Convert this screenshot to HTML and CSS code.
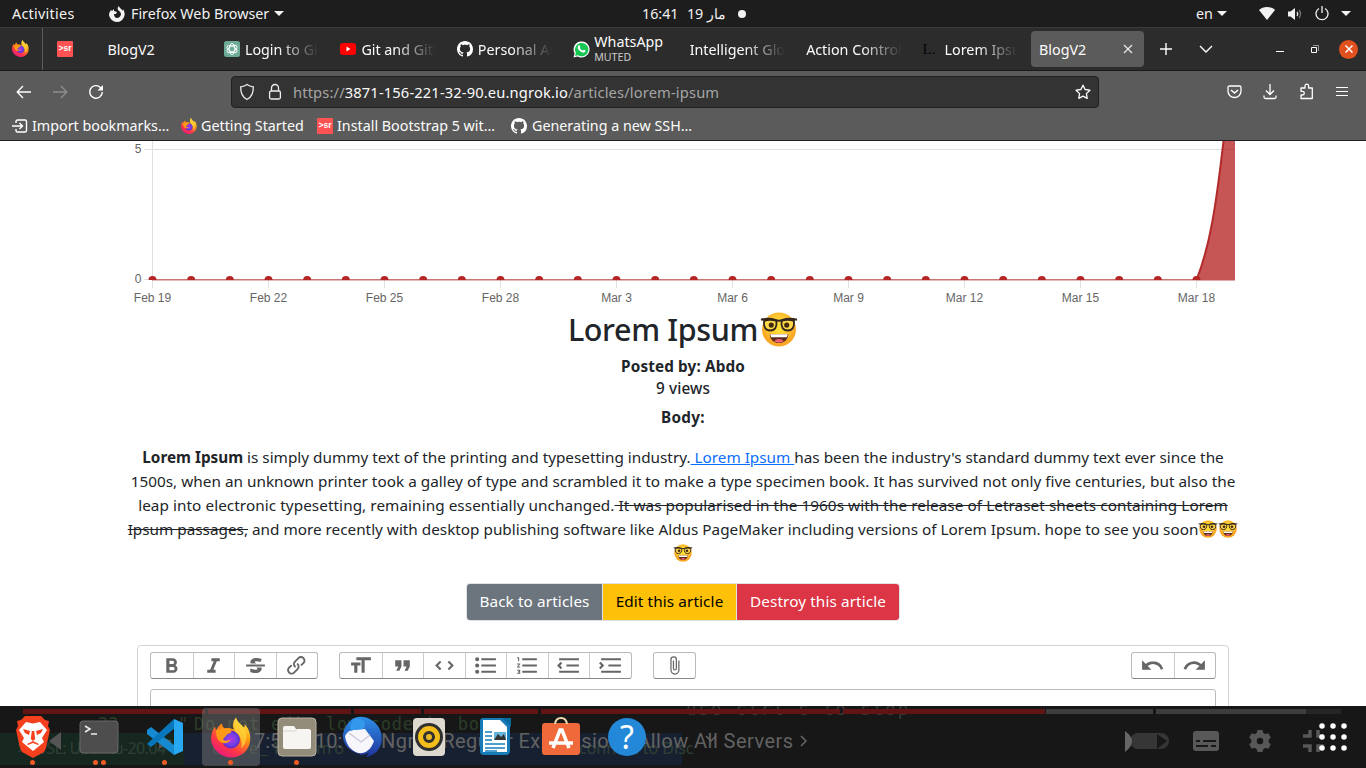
FILE: index.html
```html
<!DOCTYPE html>
<html lang="en">
<head>
<meta charset="utf-8">
<title>BlogV2</title>
<link rel="stylesheet" href="styles.css">
</head>
<body>
<svg class="defs" width="0" height="0" aria-hidden="true">
  <defs>
    <linearGradient id="fxg" x1=".8" y1="0" x2=".2" y2="1"><stop offset="0" stop-color="#fff44f"/><stop offset=".35" stop-color="#ff980e"/><stop offset=".7" stop-color="#ff3647"/><stop offset="1" stop-color="#e31587"/></linearGradient>
    <radialGradient id="fxp"><stop offset="0" stop-color="#b833e1"/><stop offset=".6" stop-color="#7542e5"/><stop offset="1" stop-color="#592acb"/></radialGradient>
    <linearGradient id="tb" x1="0" y1="0" x2="0" y2="1"><stop offset="0" stop-color="#2d8fe8"/><stop offset="1" stop-color="#20349c"/></linearGradient>
    <radialGradient id="em" cx=".5" cy=".4"><stop offset=".3" stop-color="#ffdc36"/><stop offset="1" stop-color="#f9a825"/></radialGradient>
  </defs>
  <symbol id="firefox" viewBox="0 0 40 40">
    <path fill="url(#fxg)" d="M25 0c1 5 5 6 8 10 1-1 1-2 0-4 5 5 7 11 6 18-1 9-9 16-19 16S1 32 0 22c0-5 1-9 4-13l1 4c2-4 4-6 6-7 0 2 1 4 3 5 3-1 6 0 9 1-2-4-1-8 2-12z"/>
    <circle cx="20" cy="22" r="9" fill="url(#fxp)"/>
    <path fill="#ff9a16" d="M5 13c3-2 6-2 9-2l5 1c1 1 2 2 1 3l-4 2c-1 2-3 3-4 5 2 2 5 1 8 0-2 3-6 5-10 3-4-3-5-7-5-12z"/>
    <path fill="#ffd43b" d="M25 0c1 5 6 7 9 13 3 7 1 14-4 18 2-7 0-12-5-16-3-4-3-10 0-15z" opacity=".75"/>
  </symbol>
  <symbol id="github" viewBox="0 0 16 16"><path fill="#fff" d="M8 0C3.58 0 0 3.58 0 8c0 3.54 2.29 6.53 5.47 7.59.4.07.55-.17.55-.38 0-.19-.01-.82-.01-1.49-2.01.37-2.53-.49-2.69-.94-.09-.23-.48-.94-.82-1.13-.28-.15-.68-.52-.01-.53.63-.01 1.08.58 1.23.82.72 1.21 1.87.87 2.33.66.07-.52.28-.87.51-1.07-1.78-.2-3.64-.89-3.64-3.95 0-.87.31-1.59.82-2.15-.08-.2-.36-1.02.08-2.12 0 0 .67-.21 2.2.82.64-.18 1.32-.27 2-.27s1.36.09 2 .27c1.53-1.04 2.2-.82 2.2-.82.44 1.1.16 1.92.08 2.12.51.56.82 1.27.82 2.15 0 3.07-1.87 3.75-3.65 3.95.29.25.54.73.54 1.48 0 1.07-.01 1.93-.01 2.2 0 .21.15.46.55.38A8.01 8.01 0 0 0 16 8c0-4.42-3.58-8-8-8z"/></symbol>
  <symbol id="nerd" viewBox="0 0 36 34">
    <circle cx="18" cy="17" r="16.500" fill="url(#em)"/>
    <path d="M9 21.500h18c-.5 6-4.500 8.500-9 8.500s-8.500-2.500-9-8.500z" fill="#5d2a1b"/><path d="M9.500 21.500h17l-.8 3H10.300z" fill="#fff"/><path d="M13.500 28.500c2-3 7-3 9 0-2.500 1.800-6.500 1.800-9 0z" fill="#ee5f78"/>
    <path d="M3.500 8.500q6-2 12 0 1 9.500-6 9.500t-6-9.500zM20.500 8.500q6-2 12 0 1 9.500-6 9.500t-6-9.500z" fill="#ffd84a" stroke="#33261c" stroke-width="1.800"/>
    <path d="M.5 7.500q8-2 14 .3 3.500 1.400 7 0 6-2.300 14-.3" fill="none" stroke="#33261c" stroke-width="2"/>
    <circle cx="10.500" cy="12.700" r="2.500" fill="#422b0d"/><circle cx="25.500" cy="12.700" r="2.500" fill="#422b0d"/>
  </symbol>
</svg>

<header class="topbar">
  <span class="t-act">Activities</span>
  <svg class="t-fx" width="16" height="16" viewBox="0 0 16 16"><path fill="#f2f2f2" d="M10 0c0 2 3 3 4 5V3c2 3 2 6 1 8-1 3-4 5-7 5-4 0-7-3-8-7 0-2 1-4 2-5l1 1 2-2v2l3 1-1 2H5c0 2 1 4 3 4s4-2 4-4-2-3-3-4c-1-2 0-3 1-4z"/></svg>
  <span class="t-app">Firefox Web Browser</span>
  <i class="caret c1"></i>
  <span class="t-time">16:41</span><span class="t-date" dir="rtl">مار 19</span><i class="dot"></i>
  <span class="t-en">en</span><i class="caret c2"></i>
  <svg class="t-wifi" width="16" height="14" viewBox="0 0 16 14"><path fill="#f2f2f2" d="M0 3C4-1 12-1 16 3L8 13z"/></svg>
  <svg class="t-vol" width="16" height="14" viewBox="0 0 16 14"><path fill="#f2f2f2" d="M1 4.500h2.500L8 1v12L3.500 9.500H1z"/><path d="M10 5q1.500 2 0 4" fill="none" stroke="#eee" stroke-width="1.300"/><path d="M12 3q3 4 0 8" fill="none" stroke="#777" stroke-width="1.300"/></svg>
  <svg class="t-pow" width="14" height="15" viewBox="0 0 14 15"><path d="M4 2.500a6 6 0 1 0 6 0M7 0v7" fill="none" stroke="#f2f2f2" stroke-width="1.300"/></svg>
  <i class="caret c3"></i>
</header>

<nav class="tabs">
  <div class="pin"><svg width="17" height="17"><use href="#firefox"/></svg></div>
  <div class="pin2"><span class="sr">&gt;sr</span></div>
  <div class="tab"><span class="lbl">BlogV2</span></div>
  <div class="tab"><svg width="16" height="16" viewBox="0 0 16 16"><rect width="16" height="16" rx="2.500" fill="#6cab97"/><g fill="none" stroke="#fff" stroke-width=".9"><ellipse cx="8" cy="8" rx="2.800" ry="5.500"/><ellipse cx="8" cy="8" rx="2.800" ry="5.500" transform="rotate(60 8 8)"/><ellipse cx="8" cy="8" rx="2.800" ry="5.500" transform="rotate(120 8 8)"/></g></svg><span class="lbl fade">Login to GitH</span></div>
  <div class="tab"><svg width="16" height="16" viewBox="0 0 16 16"><rect y="2" width="16" height="12" rx="3" fill="#f00"/><path d="M6.500 5.500 10.500 8l-4 2.500z" fill="#fff"/></svg><span class="lbl fade">Git and GitHub</span></div>
  <div class="tab"><svg width="16" height="16"><use href="#github"/></svg><span class="lbl fade">Personal Acc</span></div>
  <div class="tab wa"><svg width="17" height="17" viewBox="0 0 17 17"><path d="M.5 16.500 1.600 12.400A8 8 0 1 1 4.600 15.400z" fill="#fff"/><path d="M2 15l.9-3A6.700 6.700 0 1 1 5 14.200z" fill="#16c653"/><path d="M5.500 4.500c1-.8 1.300 0 1.800 1.300.2.500-.7.900-.5 1.300.7 1.300 1.600 2 2.800 2.500.5.100.8-1 1.200-.9l1.700.9c0 2-1.600 2.300-3 1.900C6.800 10.500 5 8.500 4.800 7c-.1-1.200.2-2 .7-2.500z" fill="#fff"/></svg><span class="two"><b>WhatsApp</b><small>MUTED</small></span></div>
  <div class="tab"><span class="lbl fade">Intelligent Glob</span></div>
  <div class="tab"><span class="lbl fade">Action Controlle</span></div>
  <div class="tab"><span class="ell">L.</span><span class="lbl fade">Lorem Ipsum -</span></div>
  <div class="tab active"><span class="lbl">BlogV2</span><svg width="10" height="10" viewBox="0 0 10 10"><path d="M1 1l8 8M9 1 1 9" stroke="#eee" stroke-width="1.100"/></svg></div>
  <svg class="plus" width="14" height="14" viewBox="0 0 14 14"><path d="M7 1v12M1 7h12" stroke="#fff" stroke-width="1.400"/></svg>
  <svg class="chev" width="14" height="9" viewBox="0 0 14 9"><path d="m1 1 6 6 6-6" fill="none" stroke="#fff" stroke-width="1.400"/></svg>
  <svg class="min" width="8" height="10" viewBox="0 0 8 10"><path d="M0 7.500h8" stroke="#fff"/></svg>
  <svg class="max" width="9" height="9" viewBox="0 0 9 9"><path d="M1.500 2.500h5v5h-5z" fill="none" stroke="#fff"/><path d="M3 .5h5.500V6" fill="none" stroke="#999"/></svg>
  <span class="close"><svg width="8" height="8" viewBox="0 0 8 8"><path d="M.5.5l7 7M7.500.5l-7 7" stroke="#fff" stroke-width="1.500"/></svg></span>
</nav>

<section class="chrome">
  <div class="navrow">
    <svg class="back" width="16" height="14" viewBox="0 0 16 14"><path d="M15 7H1.500M7 1 1.200 7 7 13" fill="none" stroke="#fff" stroke-width="1.300"/></svg>
    <svg class="fwd" width="16" height="14" viewBox="0 0 16 14"><path d="M1 7h13.500M9 1l5.800 6L9 13" fill="none" stroke="#8e8e8e" stroke-width="1.300"/></svg>
    <svg class="rel" width="16" height="16" viewBox="0 0 16 16"><path d="M14.300 8A6.300 6.300 0 1 1 12.500 3.500L14 5" fill="none" stroke="#fff" stroke-width="1.400"/><path d="M15 1v5.500H9.500z" fill="#fff"/></svg>
    <div class="url">
      <svg width="16" height="18" viewBox="0 0 16 18"><path d="M8 1.500c2 1.500 4 2 6.300 2.300C14.500 10 12 14.500 8 16.500 4 14.500 1.500 10 1.700 3.800 4 3.500 6 3 8 1.500z" fill="none" stroke="#eee" stroke-width="1.300"/></svg>
      <svg width="14" height="18" viewBox="0 0 14 18"><rect x="1.600" y="8" width="10.800" height="8" rx="1.500" fill="none" stroke="#eee" stroke-width="1.300"/><path d="M3.500 8V5a3.500 3.500 0 0 1 7 0v3" fill="none" stroke="#eee" stroke-width="1.300"/></svg>
      <span class="addr">https://<b>3871-156-221-32-90.eu.ngrok.io</b>/articles/lorem-ipsum</span>
      <svg class="star" width="16" height="16" viewBox="0 0 16 16"><path d="m8 1.200 2.100 4.300 4.800.7-3.500 3.400.8 4.700L8 12.100l-4.200 2.200.8-4.700L1.100 6.200l4.800-.7z" fill="none" stroke="#fff" stroke-width="1.300" stroke-linejoin="round"/></svg>
    </div>
    <svg class="pocket" width="15" height="14" viewBox="0 0 15 14"><path d="M1 2.500q0-1.500 1.500-1.500h10Q14 1 14 2.500V6c0 4-3 6.500-6.500 6.500S1 10 1 6z" fill="none" stroke="#fff" stroke-width="1.300"/><path d="m4 5 3.500 3L11 5" fill="none" stroke="#fff" stroke-width="1.500"/></svg>
    <svg class="dl" width="14" height="16" viewBox="0 0 14 16"><path d="M7 0v10M3 6.500l4 4 4-4M1 11.500V13q0 1.500 1.500 1.500h9Q13 14.500 13 13v-1.500" fill="none" stroke="#fff" stroke-width="1.300"/></svg>
    <svg class="ext" width="15" height="17" viewBox="0 0 15 17"><path d="M2 5h4V3a1.800 1.800 0 0 1 3.600 0v2h3.700v10.500H2V12h1.500a1.800 1.800 0 0 0 0-3.600H2z" fill="none" stroke="#fff" stroke-width="1.300" stroke-linejoin="round"/></svg>
    <svg class="menu" width="12" height="11" viewBox="0 0 12 11"><path d="M0 1.500h12M0 5.500h12M0 9.500h12" stroke="#fff"/></svg>
  </div>
  <div class="marks">
    <svg class="m1" width="16" height="14" viewBox="0 0 16 14"><path d="M4 4V2.500Q4 1 5.500 1H13q1.500 0 1.500 1.500v9Q14.500 13 13 13H5.500Q4 13 4 11.500V10M0 7h10M7.500 4 10.500 7l-3 3" fill="none" stroke="#fff" stroke-width="1.400"/></svg><span class="k1">Import bookmarks…</span>
    <svg class="m2" width="16" height="16"><use href="#firefox"/></svg><span class="k2">Getting Started</span>
    <span class="sr m3">&gt;sr</span><span class="k3">Install Bootstrap 5 wit…</span>
    <svg class="m4" width="16" height="16"><use href="#github"/></svg><span class="k4">Generating a new SSH…</span>
  </div>
</section>

<main class="page">
  <svg class="chart" width="1366" height="170" viewBox="0 141 1366 170">
    <path d="M144 149.500h1091M152.500 141v147" stroke="#e0e0e0" fill="none"/>
    <path d="M268.500 280v8M384.500 280v8M500.500 280v8M616.500 280v8M732.500 280v8M848.500 280v8M964.500 280v8M1080.500 280v8M1196.500 280v8M144 279.500h8" stroke="#e0e0e0"/>
    <path d="M1196.500 280.500C1210 246 1216 206 1223.500 141H1235V280.500z" fill="#c65555"/>
    <path d="M1223 149.500h12" stroke="#b94c4c"/>
    <path d="M152 279.800h1044" stroke="#ca7474" stroke-width="1.400"/><path d="M1196.500 280C1210 246 1216 206 1223.500 141" fill="none" stroke="#b22a2a" stroke-width="2"/>
    <path fill="#b52525" d="M148.500 280a4 4 0 0 1 8 0zm38.670 0a4 4 0 0 1 8 0zm38.660 0a4 4 0 0 1 8 0zm38.670 0a4 4 0 0 1 8 0zm38.670 0a4 4 0 0 1 8 0zm38.660 0a4 4 0 0 1 8 0zm38.670 0a4 4 0 0 1 8 0zm38.670 0a4 4 0 0 1 8 0zm38.660 0a4 4 0 0 1 8 0zm38.670 0a4 4 0 0 1 8 0zm38.670 0a4 4 0 0 1 8 0zm38.660 0a4 4 0 0 1 8 0zm38.670 0a4 4 0 0 1 8 0zm38.670 0a4 4 0 0 1 8 0zm38.660 0a4 4 0 0 1 8 0zm38.670 0a4 4 0 0 1 8 0zm38.670 0a4 4 0 0 1 8 0zm38.660 0a4 4 0 0 1 8 0zm38.670 0a4 4 0 0 1 8 0zm38.670 0a4 4 0 0 1 8 0zm38.660 0a4 4 0 0 1 8 0zm38.670 0a4 4 0 0 1 8 0zm38.670 0a4 4 0 0 1 8 0zm38.660 0a4 4 0 0 1 8 0zm38.670 0a4 4 0 0 1 8 0zm38.670 0a4 4 0 0 1 8 0zm38.660 0a4 4 0 0 1 8 0zm38.670 0a4 4 0 0 1 8 0z"/>
    <g class="axis"><text x="138" y="153">5</text><text x="138" y="283">0</text><text x="152.500" y="302">Feb 19</text><text x="268.500" y="302">Feb 22</text><text x="384.500" y="302">Feb 25</text><text x="500.500" y="302">Feb 28</text><text x="616.500" y="302">Mar 3</text><text x="732.500" y="302">Mar 6</text><text x="848.500" y="302">Mar 9</text><text x="964.500" y="302">Mar 12</text><text x="1080.500" y="302">Mar 15</text><text x="1196.500" y="302">Mar 18</text></g>
  </svg>
  <h1><span>Lorem Ipsum</span><svg width="38" height="35"><use href="#nerd"/></svg></h1>
  <h2 class="by">Posted by: Abdo</h2>
  <h2 class="views">9 views</h2>
  <h2 class="bodyh">Body:</h2>
  <div class="article">
    <div class="line"><span class="l1"><strong>Lorem Ipsum</strong> is simply dummy text of the printing and typesetting industry.<a> Lorem Ipsum </a>has been the industry's standard dummy text ever since the</span></div>
    <div class="line"><span class="l2">1500s, when an unknown printer took a galley of type and scrambled it to make a type specimen book. It has survived not only five centuries, but also the</span></div>
    <div class="line"><span class="l3">leap into electronic typesetting, remaining essentially unchanged.<del> It was popularised in the 1960s with the release of Letraset sheets containing Lorem</del></span></div>
    <div class="line"><span class="l4"><del>Ipsum passages,</del> and more recently with desktop publishing software like Aldus PageMaker including versions of Lorem Ipsum. hope to see you soon</span><svg width="20" height="18"><use href="#nerd"/></svg><svg width="20" height="18"><use href="#nerd"/></svg></div>
    <div class="line"><svg width="20" height="18"><use href="#nerd"/></svg></div>
  </div>
  <div class="actions"><a class="b1">Back to articles</a><a class="b2">Edit this article</a><a class="b3">Destroy this article</a></div>
  <div class="trix">
    <div class="tools">
      <div class="grp">
        <i><svg viewBox="0 0 24 24"><path d="M15.600 11.800c1-.7 1.600-1.800 1.600-2.800a4 4 0 0 0-4-4H7v14h7c2.100 0 3.700-1.700 3.700-3.800 0-1.500-.8-2.800-2.100-3.400zM10 7.500h3a1.500 1.500 0 1 1 0 3h-3v-3zm3.500 9H10v-3h3.500a1.500 1.500 0 1 1 0 3z"/></svg></i>
        <i><svg viewBox="0 0 24 24"><path d="M10 5v3h2.200l-3.400 8H6v3h8v-3h-2.200l3.400-8H18V5h-8z"/></svg></i>
        <i><svg viewBox="0 0 24 24"><path d="M12.730 14l.28.14c.26.15.45.3.57.44.12.14.18.3.18.5 0 .3-.15.56-.44.75-.3.2-.76.3-1.390.3A13.520 13.520 0 0 1 7 14.950v3.370a10.640 10.640 0 0 0 4.840.88c1.260 0 2.350-.19 3.280-.56.93-.37 1.640-.9 2.140-1.570s.74-1.450.74-2.320c0-.26-.02-.51-.06-.75h-5.210zm-5.500-4c-.08-.34-.12-.7-.12-1.100 0-1.290.52-2.300 1.580-3.020 1.050-.72 2.500-1.080 4.340-1.080 1.620 0 3.280.34 4.970 1l-1.300 2.930c-1.470-.6-2.730-.9-3.800-.9-.55 0-.96.08-1.200.26-.26.17-.38.38-.38.64 0 .27.16.52.48.74.17.12.53.3 1.050.53H7.230zM3 13h18v-2H3v2z"/></svg></i>
        <i><svg viewBox="0 0 24 24"><path d="M9.880 13.700a4.300 4.300 0 0 1 0-6.070l3.370-3.370a4.260 4.260 0 0 1 6.070 0 4.300 4.300 0 0 1 0 6.060l-1.960 1.720a.91.91 0 1 1-1.300-1.300l1.970-1.710a2.460 2.460 0 0 0-3.480-3.480l-3.380 3.370a2.460 2.460 0 0 0 0 3.480.91.91 0 1 1-1.300 1.300z"/><path d="M4.250 19.460a4.300 4.300 0 0 1 0-6.070l1.930-1.900a.91.91 0 1 1 1.300 1.300l-1.930 1.900a2.460 2.460 0 0 0 3.480 3.480l3.370-3.380c.96-.96.96-2.520 0-3.480a.91.91 0 1 1 1.300-1.300 4.300 4.300 0 0 1 0 6.070l-3.380 3.380a4.260 4.260 0 0 1-6.070 0z"/></svg></i>
      </div>
      <div class="grp">
        <i><svg viewBox="0 0 24 24"><path d="M12 9v3H9v7H6v-7H3V9h9zM8 4h14v3h-6v12h-3V7H8V4z"/></svg></i>
        <i><svg viewBox="0 0 24 24"><path d="M6 17h3l2-4V7H5v6h3zm8 0h3l2-4V7h-6v6h3z"/></svg></i>
        <i><svg viewBox="0 0 24 24"><path d="M18.200 12L15 15.200l1.400 1.400L21 12l-4.600-4.600L15 8.800l3.200 3.200zM5.800 12L9 8.800 7.600 7.400 3 12l4.600 4.600L9 15.200 5.800 12z"/></svg></i>
        <i><svg viewBox="0 0 24 24"><path d="M4 4a2 2 0 1 0 0 4 2 2 0 0 0 0-4zm0 6a2 2 0 1 0 0 4 2 2 0 0 0 0-4zm0 6a2 2 0 1 0 0 4 2 2 0 0 0 0-4zm4 3h14v-2H8v2zm0-6h14v-2H8v2zm0-8v2h14V5H8z"/></svg></i>
        <i><svg viewBox="0 0 24 24"><path d="M2 17h2v.5H3v1h1v.5H2v1h3v-4H2v1zm1-9h1V4H2v1h1v3zm-1 3h1.800L2 13.100v.9h3v-1H3.200L5 10.900V10H2v1zm5-6v2h14V5H7zm0 14h14v-2H7v2zm0-6h14v-2H7v2z"/></svg></i>
        <i><svg viewBox="0 0 24 24"><path d="M3 19h19v-2H3v2zm7-6h12v-2H10v2zm-8.300-.3l2.800 2.900L6 14.200 4 12l2-2-1.400-1.500L1 12l.7.7zM3 5v2h19V5H3z"/></svg></i>
        <i><svg viewBox="0 0 24 24"><path d="M3 19h19v-2H3v2zm7-6h12v-2H10v2zm-6.900-1L1 14.200l1.400 1.400L6 12l-.7-.7-2.800-2.800L1 9.900 3.100 12zM3 5v2h19V5H3z"/></svg></i>
      </div>
      <div class="grp"><i><svg viewBox="0 0 24 24"><path d="M16.500 6v11.500a4 4 0 1 1-8 0V5a2.500 2.500 0 0 1 5 0v10.500a1 1 0 1 1-2 0V6H10v9.500a2.500 2.500 0 0 0 5 0V5a4 4 0 1 0-8 0v12.500a5.500 5.500 0 0 0 11 0V6h-1.500z" transform="translate(2.400 2.400) scale(.8)"/></svg></i></div>
      <div class="grp last">
        <i><svg viewBox="0 0 24 24"><path d="M12.500 8c-2.600 0-5 1-6.900 2.600L2 7v9h9l-3.600-3.600A8 8 0 0 1 20 16l2.400-.8a10.500 10.500 0 0 0-10-7.200z"/></svg></i>
        <i><svg viewBox="0 0 24 24"><path d="M18.400 10.600a10.500 10.500 0 0 0-16.900 4.600L4 16a8 8 0 0 1 12.700-3.600L13 16h9V7l-3.600 3.600z"/></svg></i>
      </div>
    </div>
    <div class="editor"></div>
  </div>
</main>

<footer class="dock">
  <svg class="ghost" width="1366" height="62" viewBox="0 706 1366 62">
    <rect y="733" width="184" height="32" fill="#15271f"/><rect x="184" y="733" width="498" height="32" fill="#172030"/>
    <g class="code"><text x="98" y="730">22</text><text x="178" y="730">"</text><text x="194" y="730" textLength="296">Do not edit low code in box</text></g>
    <g class="wsl"><text x="16" y="754" textLength="150">✕ WSL: Ubuntu-20.04</text><text x="212" y="754" textLength="132">code_1 demo</text><text x="560" y="754">Reconnect to Disc</text></g>
    <text class="stop" x="686" y="715" textLength="222">use ctrl c to stop</text>
    <path d="M23 711.500h182M208 711.500h143M354 711.500h67M424 711.500h114M541 711.500h299M843 711.500h202" stroke="#611414" stroke-width="5"/>
    <path d="M1046 711.500h107M1156 711.500h150" stroke="#3d3d3d" stroke-width="5"/><path d="M1306 711.500h35" stroke="#262626" stroke-width="5"/>
    <path d="M49 741l12-9v18zM159 736l13 5-13 8z" fill="#555"/>
    <g class="vid"><text x="254" y="748">7:5</text><text x="315" y="748">10:1</text><text x="381" y="748" textLength="412">Ngrok Regular Expression · Allow All Servers</text></g>
    <path d="m801 736 5 5-5 5M706 736l5 5 5-5" fill="none" stroke="#666" stroke-width="1.500"/>
    <rect x="1130" y="733" width="39" height="16" rx="8" fill="#363636"/><path d="M1125 731q14 10 0 21z" fill="#666"/><path d="M1157 734l10 7-10 8z" fill="#171717"/>
    <rect x="1193" y="731" width="26" height="20" rx="3" fill="#585858"/><path d="M1196 741h4M1203 741h13M1196 746h12M1211 746h5" stroke="#181818" stroke-width="2"/>
    <circle cx="1260" cy="741" r="6" fill="none" stroke="#585858" stroke-width="5.500"/><path d="M1257.500 730h5l1 4h-7zM1257.500 752h5l1-4h-7zM1268.300 733.300l2.500 4.300-3 2.900-3.500-6zM1249.200 744.400l2.500 4.300 4-1.200-3.500-6zM1270.800 744.400l-2.500 4.300-4-1.200 3.500-6zM1251.700 733.300l-2.500 4.300 3 2.900 3.500-6z" fill="#585858"/>
    <path d="M1303 736h7v-6M1303 746h7v6M1324 736h-6v-6M1324 746h-6v6" fill="none" stroke="#585858" stroke-width="3.500"/>
  </svg>
  <div class="apps">
    <div class="app d1"><svg width="36" height="42" viewBox="0 0 36 42"><path d="M10 0h16l4 4 4 1-1 5 2 4-4 18-2 4-11 6-11-6-2-4L1 14l2-4-1-5 4-1z" fill="#f4401c"/><path d="M11 6l7 1.500L25 6l7 8-5 8 2 4-6 5-5 4-5-4-6-5 2-4-5-8z" fill="#fff"/><path d="M8 13l7 2-1 4-4-2zM28 13l-7 2 1 4 4-2zM16.800 15h2.400l1 8L18 25l-2.200-2zM12 28l6-3 6 3-1 1-5-2-5 2z" fill="#f4401c"/></svg></div>
    <div class="app d2"><svg width="40" height="34" viewBox="0 0 40 34"><rect x="1" y="1" width="38" height="32" rx="3" fill="#4d4d4d" stroke="#696969"/><path d="m6 6 5 3-5 3M12 14h6" fill="none" stroke="#eee" stroke-width="1.500"/></svg></div>
    <div class="app d1"><svg width="38" height="38" viewBox="0 0 38 38"><path d="M1 12l4-3 23 18v10L1 16z" fill="#168ad0"/><path d="M1 26 28 1v10L5 29z" fill="#0876bb"/><path d="m28 1 9 4v28l-9 4z" fill="#28a8f3"/></svg></div>
    <div class="app d1 on"><svg width="40" height="41"><use href="#firefox"/></svg></div>
    <div class="app d1"><svg width="40" height="40" viewBox="0 0 40 40"><rect x="1" y="1" width="38" height="38" rx="4" fill="#948c7a" stroke="#b9b19f"/><path d="M6 11q0-2 2-2h9l2 3h13q2 0 2 2v16q0 2-2 2H8q-2 0-2-2z" fill="#f6f5f2"/><path d="M6 14h12l2-2" fill="none" stroke="#d8d5cc"/></svg></div>
    <div class="app"><svg width="42" height="42" viewBox="0 0 42 42"><path d="M8 5C14-1 24 0 31 5c8 6 10 15 8 23-2 7-8 12-15 13l3-4-7 2C8 36 0 29 1 18 2 12 5 8 8 5z" fill="url(#tb)"/><path d="M3 20c2-4 5-6 8-6l12-1 9 12c-3 9-9 13-16 12C8 34 4 28 3 20z" fill="#f7f7fb"/><path d="M7 17l12 9 9-7" fill="none" stroke="#c4c7d8" stroke-width="1.200"/><path d="M12 3c9-2 13 4 10 9-3 3-9 0-13 3-2-4 0-9 3-12z" fill="#3299eb"/></svg></div>
    <div class="app"><svg width="34" height="40" viewBox="0 0 34 40"><rect x="1" y="1" width="32" height="38" rx="4" fill="#ded9ce"/><circle cx="17" cy="20" r="14" fill="#303030"/><circle cx="17" cy="20" r="8.500" fill="#303030" stroke="#f3bd1a" stroke-width="5"/><circle cx="17" cy="20" r="3" fill="#e8b926"/></svg></div>
    <div class="app"><svg width="34" height="40" viewBox="0 0 34 40"><path d="M4 1h28v33q0 4-4 4H6q-4 0-4-4V3z" fill="#167bb6"/><path d="M5 3h17l7 7v25H5z" fill="#fff"/><path d="M24 1h9v9z" fill="#066aa0"/><path d="M7 15h7M7 19h7M7 23h7M7 27h20M7 31h20M7 34h12" stroke="#1680be" stroke-width="1.500"/><rect x="16" y="15" width="12" height="8" fill="#66b5df"/><path d="m16 23 4-6 3 3 3-3 2 6" fill="#333"/></svg></div>
    <div class="app"><svg width="40" height="40" viewBox="0 0 40 40"><rect x="1" y="6" width="38" height="32" rx="3" fill="#f0693b"/><path d="M14 7C15-1 25-1 26 7" fill="none" stroke="#f3d8ae" stroke-width="2"/><path d="m12 31 7-18h2l7 18M8 26h24" fill="none" stroke="#fff" stroke-width="3.500"/></svg></div>
    <div class="app"><svg width="40" height="40" viewBox="0 0 40 40"><circle cx="20" cy="20" r="19" fill="#2388d8"/><text class="q" x="20" y="31.500">?</text></svg></div>
  </div>
  <svg class="grid" width="28" height="28" viewBox="0 0 28 28"><path d="M3 3h.01M14 3h.01M25 3h.01M3 14h.01M14 14h.01M25 14h.01M3 25h.01M14 25h.01M25 25h.01" stroke="#fff" stroke-width="5.500" stroke-linecap="round"/></svg>
</footer>
</body>
</html>
```
FILE: styles.css
```css
* { box-sizing: border-box; }
body { margin: 0; width: 1366px; height: 768px; overflow: hidden; display: flex; flex-direction: column; background: #fff; color: #212529; font-family: "Noto Sans", "Open Sans", sans-serif; font-size: 14.300px; }
svg { display: block; flex: none; }
.defs { position: absolute; }
span, b, small { white-space: nowrap; }

.topbar { height: 27px; flex: none; display: flex; align-items: center; background: #1d1d1d; color: #f2f2f2; padding-left: 12px; }
.t-act { width: 97px; letter-spacing: .3px; }
.t-app { width: 143px; margin-left: 6px; }
.caret { border: 5px solid transparent; border-top-color: #f2f2f2; border-bottom: 0; flex: none; }
.c1 { margin-right: 358px; }
.t-time { width: 44px; }
.t-date { width: 40px; text-align: right; }
.dot { width: 8px; height: 8px; border-radius: 50%; background: #f2f2f2; margin: 0 450px 0 12px; }
.t-en { width: 21px; }
.c2 { margin-right: 32px; }
.t-wifi { margin-right: 12px; }
.t-vol { margin-right: 12px; }
.t-pow { margin-right: 12px; }

.tabs { height: 44px; flex: none; display: flex; align-items: center; background: #2c2c2c; border-top: 1px solid #3a3a3a; border-bottom: 1px solid #1a1a1a; color: #fbfbfb; }
.pin { width: 43px; height: 42px; padding: 12px 0 0 12px; border-right: 1px solid #5c5c5c; flex: none; }
.pin2 { width: 56.500px; padding-left: 14px; flex: none; }
.sr { display: block; width: 16px; height: 16px; border-radius: 1px; background: #ff5252; color: #fff; font: bold 8.500px/15px "Liberation Sans", sans-serif; text-align: center; flex: none; }
.tab { width: 116.450px; flex: none; display: flex; align-items: center; gap: 5px; padding: 0 10px 0 8px; }
.lbl { overflow: hidden; flex: 0 1 auto; }
.fade { flex: 1; -webkit-mask-image: linear-gradient(90deg, #000 calc(100% - 44px), transparent calc(100% - 3px)); mask-image: linear-gradient(90deg, #000 calc(100% - 44px), transparent calc(100% - 3px)); }
.wa { gap: 4px; }
.two { display: flex; flex-direction: column; align-items: flex-start; line-height: 16px; }
.two b { font-weight: 400; }
.two small { font-size: 10.600px; line-height: 14px; color: #ccc; }
.ell { width: 17px; font: 15px "Liberation Serif", serif; color: #050505; }
.active { width: 113px; height: 36px; background: #5b5b5b; border-radius: 4px; justify-content: space-between; padding: 0 11px 0 8px; }
.plus { margin-left: 15px; }
.chev { margin-left: 26px; }
.min { margin-left: 63px; }
.max { margin-left: 26px; }
.close { margin-left: 20px; width: 19px; height: 19px; border-radius: 50%; background: #e2501e; display: flex; align-items: center; justify-content: center; flex: none; }

.chrome { height: 70px; flex: none; background: #5b5b5b; border-bottom: 1px solid #202020; color: #fbfbfb; }
.navrow { height: 41px; display: flex; align-items: center; padding-left: 16px; }
.fwd { margin-left: 20px; }
.rel { margin-left: 20px; }
.url { margin-left: 127px; width: 868px; height: 32px; background: #333; border: 1px solid #202020; border-radius: 4px; display: flex; align-items: center; padding: 0 7px; gap: 13px; color: #a5a5a5; }
.addr { margin-left: -2px; flex: 1; font-size: 14.700px; letter-spacing: .14px; }
.addr b { color: #fbfbfb; font-weight: 400; }
.pocket { margin-left: 128px; }
.dl { margin-left: 21px; }
.ext { margin-left: 22px; }
.menu { margin-left: 22px; }
.marks { height: 27px; display: flex; align-items: center; padding-left: 12px; }
.k1 { margin-left: 4px; width: 149px; }
.k2 { margin-left: 4px; width: 116px; }
.k3 { margin-left: 4px; width: 174px; }
.k4 { margin-left: 5px; }

.page { height: 565px; flex: none; overflow: hidden; }
.axis { font: 12px "Liberation Sans", Arial, sans-serif; fill: #666; text-anchor: middle; }
h1 { margin: -1px 0 0; height: 38px; display: flex; justify-content: center; align-items: center; font-size: 30.500px; font-weight: 500; letter-spacing: -.35px; gap: 2px; }
h2 { margin: 0; text-align: center; font-size: 15.300px; line-height: 22px; font-weight: 700; letter-spacing: .12px; }
.by { margin-top: 7px; }
.views { font-weight: 500; }
.bodyh { margin-top: 7px; letter-spacing: .3px; }
.article { margin-top: 17px; font-size: 15.300px; }
.line { height: 24px; line-height: 24px; display: flex; justify-content: center; align-items: center; }
.l2 { letter-spacing: .025px; }
.l3 { letter-spacing: .065px; }
.article a { color: #0d6efd; text-decoration: underline; white-space: pre-wrap; }
.actions { display: flex; width: 434px; height: 38px; margin: 18px auto 0; border: 1px solid #dee2e6; border-radius: 4px; overflow: hidden; font-size: 15.300px; line-height: 35px; letter-spacing: .11px; text-align: center; }
.b1 { width: 136px; background: #6c757d; color: #fff; border-right: 1px solid #dee2e6; }
.b2 { width: 134px; background: #ffc107; color: #000; border-right: 1px solid #dee2e6; }
.b3 { flex: 1; background: #dc3545; color: #fff; }
.trix { width: 1092px; height: 100px; margin: 24px auto 0; padding: 6px 12px; border: 1px solid #ced4da; border-radius: 4px; }
.tools { display: flex; gap: 21px; }
.grp { height: 27px; display: flex; border: 1px solid #bbb; border-bottom-color: #888; border-radius: 3px; }
.grp i { width: 41.500px; display: flex; align-items: center; justify-content: center; border-left: 1px solid #ccc; }
.grp i:first-child { border-left: 0; }
.grp svg { width: 25px; height: 25px; fill: #666; }
.last { margin-left: auto; }
.editor { height: 60px; margin-top: 10px; border: 1px solid #bbb; border-radius: 3px; }

.dock { position: relative; height: 62px; flex: none; background: #171717; overflow: hidden; }
.ghost { position: absolute; inset: 0; }
.code { font: 17px "DejaVu Sans Mono", monospace; fill: #2b3d28; }
.stop { font: 17px "DejaVu Sans Mono", monospace; fill: #3a3a3a; }
.wsl { font: 16px "Noto Sans", sans-serif; fill: #304036; }
.vid { font: 20px Roboto, sans-serif; fill: #626262; }
.apps { position: relative; display: flex; }
.app { position: relative; width: 66px; height: 62px; display: flex; align-items: center; justify-content: center; }
.d1::after, .d2::after { content: ""; position: absolute; left: 30px; top: 54px; width: 5px; height: 5px; border-radius: 50%; background: #f05a24; }
.d2::after { left: 27px; box-shadow: 8px 0 #f05a24; }
.on::before { content: ""; position: absolute; left: 4px; top: 2px; width: 58px; height: 58px; border-radius: 4px; background: rgba(125, 125, 125, .45); }
.on svg { position: relative; }
.q { font: 32px "Noto Sans", sans-serif; fill: #fff; text-anchor: middle; }
.grid { position: absolute; left: 1319px; top: 17px; }
```
